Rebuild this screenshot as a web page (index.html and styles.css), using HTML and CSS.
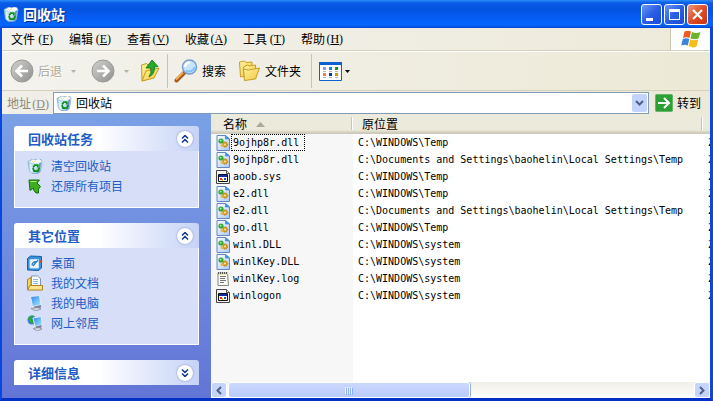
FILE: index.html
```html
<!DOCTYPE html>
<html lang="zh-CN">
<head>
<meta charset="utf-8">
<title>回收站</title>
<link rel="stylesheet" href="styles.css">
</head>
<body>
<svg class="defs" aria-hidden="true">
  <defs>
    <linearGradient id="gray" x1="0" y1="0" x2="1" y2="1"><stop offset="0" stop-color="#d2d2d0"/><stop offset="1" stop-color="#8f8f8f"/></linearGradient>
    <linearGradient id="folder" x1="0" y1="0" x2="1" y2="1"><stop offset="0" stop-color="#fff3a0"/><stop offset="1" stop-color="#f0c63c"/></linearGradient>
    <linearGradient id="page" x1="0" y1="0" x2="1" y2="1"><stop offset="0" stop-color="#ffffff"/><stop offset="1" stop-color="#a9c8f4"/></linearGradient>
    <linearGradient id="screen" x1="0" y1="0" x2="1" y2="1"><stop offset="0" stop-color="#2a80ee"/><stop offset="1" stop-color="#a8f0ff"/></linearGradient>
    <linearGradient id="glass" x1="0" y1="0" x2="1" y2="1"><stop offset="0" stop-color="#8cc8ec"/><stop offset=".5" stop-color="#d8eef8"/><stop offset="1" stop-color="#6fa4cc"/></linearGradient>
    <symbol id="bin" viewBox="0 0 16 16">
      <path d="M1 3.500l4-2 9 0 1 2-1.500 10-2.500 2H5L2.500 13z" fill="url(#glass)" stroke="#7fa9c4" stroke-width=".7"/>
      <path d="M2 4l3.500-2.500L9 2l3-1 2.500 2.500-4 1.500-5 0z" fill="#fdfdfd"/>
      <path d="M4.500 2.500l2 2 2-2" fill="none" stroke="#ecd98c" stroke-width="1"/>
      <path d="M3.500 6l1.200 8" stroke="#e8f8ff" stroke-width="1.200"/>
      <path d="M12.500 5l1.500-.5-1.500 9-2 1.500z" fill="#5a8cc0"/>
      <path d="M6 9.500l1.800-2.300h3v2.300M12 10l-1.200 3.200H8.500M6 10l1 3h1.500" fill="none" stroke="#129020" stroke-width="1.800"/>
    </symbol>
    <symbol id="dll" viewBox="0 0 14 16">
      <path d="M1 .5h8.500l4 3.500v11.500H1z" fill="url(#page)" stroke="#6386c4"/>
      <path d="M9.500.5V4h4z" fill="#3c9cf0" stroke="#3c7cd0" stroke-width=".6"/>
      <circle cx="5" cy="6" r="2.600" fill="#2faa32"/><circle cx="4.700" cy="5.600" r=".9" fill="#baf0a8"/>
      <circle cx="9" cy="9.500" r="2.700" fill="#d29b22" stroke="#9c7418" stroke-width=".7" stroke-dasharray="1 1"/><circle cx="9" cy="9.500" r=".9" fill="#fff3b8"/>
      <circle cx="6" cy="10.500" r="1.500" fill="#e2b94c"/>
    </symbol>
    <symbol id="sys" viewBox="0 0 14 16">
      <path d="M.5 1.500h10l3 3v10H.5z" fill="#f4f4f0" stroke="#444"/>
      <path d="M10.500 1.500v3h3" fill="#ddd" stroke="#555"/>
      <path d="M2.500 5.500h9v7h-9z" fill="#fff" stroke="#111"/><path d="M3 6h8v2H3z" fill="#102aa8"/>
      <path d="M4 9h2v2H4z" fill="#e33"/><path d="M6 10h1v2H6z" fill="#e6b800"/><path d="M8 9h2v2H8z" fill="#1a4cd0"/>
    </symbol>
    <symbol id="log" viewBox="0 0 14 16">
      <path d="M2 2h9.500l1 12.500H2z" fill="#fbfbf6" stroke="#87877d"/>
      <path d="M2 2.500h10" stroke="#e8cf78" stroke-width="2"/><path d="M2 2h10" stroke="#555" stroke-width="2" stroke-dasharray="1 1"/>
      <path d="M4 5.500h6M4 7.500h5M4 9.500h6M4 11.500h4" stroke="#777"/>
    </symbol>
    <symbol id="up2" viewBox="0 0 8 8"><path d="M1 3.500l3-3 3 3M1 7.500l3-3 3 3" fill="none" stroke="#103a8c" stroke-width="1.500"/></symbol>
    <symbol id="down2" viewBox="0 0 8 8"><path d="M1 .5l3 3 3-3M1 4.500l3 3 3-3" fill="none" stroke="#103a8c" stroke-width="1.500"/></symbol>
  </defs>
</svg>

<div class="window">
  <header class="titlebar">
    <svg class="ico16"><use href="#bin"/></svg>
    <h1>回收站</h1>
    <div class="caption">
      <button type="button" aria-label="最小化"><svg viewBox="0 0 19 19"><path d="M4 13h7v3H4z" fill="#fff"/></svg></button>
      <button type="button" aria-label="最大化"><svg viewBox="0 0 19 19"><path d="M4 4h11v11H4zM5 7v7h9V7z" fill="#fff" fill-rule="evenodd"/></svg></button>
      <button type="button" class="close" aria-label="关闭"><svg viewBox="0 0 19 19"><path d="M5 5l9 9M14 5l-9 9" stroke="#fff" stroke-width="2.200"/></svg></button>
    </div>
  </header>

  <nav class="menubar">
    <button type="button">文件<span>(<u>F</u>)</span></button>
    <button type="button">编辑<span>(<u>E</u>)</span></button>
    <button type="button">查看<span>(<u>V</u>)</span></button>
    <button type="button">收藏<span>(<u>A</u>)</span></button>
    <button type="button">工具<span>(<u>T</u>)</span></button>
    <button type="button">帮助<span>(<u>H</u>)</span></button>
    <div class="brand">
      <svg viewBox="0 0 20 18">
        <path d="M3.500 1.500Q7 0 10 1.500L8.500 8Q5 6.500 2 8z" fill="#ee5a24"/>
        <path d="M11 2Q15 4 19.500 2L17.500 8.500Q13.500 10 9.500 8.500z" fill="#69b32d"/>
        <path d="M1.800 9Q5 7.500 8.300 9L6.800 15.500Q3.500 14 .2 15.500z" fill="#3b86dc"/>
        <path d="M9.300 9.500Q13 11 17.200 9.500L15.500 16.500Q11.500 18.500 7.700 16z" fill="#f8bd18"/>
      </svg>
    </div>
  </nav>

  <div class="toolbar">
    <button type="button" class="tool off" disabled>
      <svg class="round" viewBox="0 0 24 24"><circle cx="12" cy="12" r="11" fill="url(#gray)" stroke="#9a9a98"/><path d="M18 12H7M12 6.500L6.500 12l5.500 5.500" fill="none" stroke="#fff" stroke-width="2.600"/></svg>后退</button>
    <button type="button" class="arrow" aria-label="后退列表" disabled><svg viewBox="0 0 5 3"><path d="M0 0h5L2.500 3z" fill="#b5b2a3"/></svg></button>
    <button type="button" class="tool off forward" aria-label="前进" disabled>
      <svg class="round" viewBox="0 0 24 24"><circle cx="12" cy="12" r="11" fill="url(#gray)" stroke="#9a9a98"/><path d="M6 12h11M12 6.500l5.500 5.500-5.500 5.500" fill="none" stroke="#fff" stroke-width="2.600"/></svg></button>
    <button type="button" class="arrow narrow" aria-label="前进列表" disabled><svg viewBox="0 0 5 3"><path d="M0 0h5L2.500 3z" fill="#b5b2a3"/></svg></button>
    <button type="button" class="tool up" aria-label="向上">
      <svg viewBox="0 0 20 24"><path d="M1.500 6l5-1.500 1.500 1.500 6-1v13L2 22z" fill="url(#folder)" stroke="#c69a20"/><path d="M2 22l4-10 13-3-5 10z" fill="url(#folder)" stroke="#c69a20"/><path d="M12 1l6 6.500-3.500.5q.5 7-5.500 10 3-5 1.500-9L6 9z" fill="#25a82b" stroke="#0e7414" stroke-width=".8"/></svg></button>
    <span class="sep"></span>
    <button type="button" class="tool search">
      <svg viewBox="0 0 24 24"><path d="M2.500 21.500L10 14" stroke="#a55a1c" stroke-width="4" stroke-linecap="round"/><path d="M2 20.500l7-7" stroke="#f5ac58" stroke-width="2"/><circle cx="15.500" cy="8" r="7" fill="#c4e4ff" stroke="#7c9cd0" stroke-width="1.500"/><path d="M11 8q.5-4.500 5-4.500" fill="none" stroke="#fff" stroke-width="2.500"/><path d="M12 12q6 2 9-4" fill="none" stroke="#80c4ff" stroke-width="2"/></svg>搜索</button>
    <button type="button" class="tool folders">
      <svg viewBox="0 0 22 22"><path d="M1 2l5-1 1.500 1.500 6-.5v12L2 17z" fill="url(#folder)" stroke="#c99d26"/><path d="M5 7l4-2 2 1 6-1v12L6 20z" fill="url(#folder)" stroke="#c99d26"/><path d="M6 20.500L5 9l5 1 11-2-4 11z" fill="url(#folder)" stroke="#c99d26"/></svg>文件夹</button>
    <span class="sep"></span>
    <button type="button" class="tool views" aria-label="查看方式">
      <svg class="grid" viewBox="0 0 23 19"><path d="M.5.5h22v18H.5z" fill="#fff" stroke="#0a61cf"/><path d="M0 0h23v3H0z" fill="#0a61cf"/><path d="M4 5h3v3H4z" fill="#9a92cc"/><path d="M10 5h3v3h-3z" fill="#1688e8"/><path d="M16 5h3v3h-3z" fill="#0b9a18"/><path d="M4 11h3v3H4z" fill="#ff7a48"/><path d="M10 11h3v3h-3z" fill="#0a32a0"/><path d="M16 11h3v3h-3z" fill="#cc9a00"/><path d="M4 9.500h3M10 9.500h3M16 9.500h3M4 15.500h3M10 15.500h3M16 15.500h3" stroke="#b4b4b4"/></svg>
      <svg class="tri" viewBox="0 0 5 3"><path d="M0 0h5L2.500 3z"/></svg></button>
  </div>

  <form class="address">
    <label for="addr">地址<span>(<u>D</u>)</span></label>
    <div class="combo">
      <svg class="ico16"><use href="#bin"/></svg>
      <input id="addr" type="text" value="回收站">
      <button type="button" aria-label="展开"><svg viewBox="0 0 9 6"><path d="M1 1l3.500 3.500L8 1" fill="none" stroke="#4d6185" stroke-width="2"/></svg></button>
    </div>
    <button type="button" class="go"><svg viewBox="0 0 18 18"><rect x=".5" y=".5" width="17" height="17" rx="1" fill="#2c9f35" stroke="#66b56b"/><path d="M3 9h11M9 4l5 5-5 5" fill="none" stroke="#fff" stroke-width="2"/></svg>转到</button>
  </form>

  <main class="content">
    <aside class="side">
      <section class="card">
        <header><h2>回收站任务</h2><button type="button" aria-label="收起"><svg><use href="#up2"/></svg></button></header>
        <ul>
          <li><a href="#"><svg class="ico16"><use href="#bin"/></svg>清空回收站</a></li>
          <li><a href="#"><svg class="ico16" viewBox="0 0 16 16"><path d="M2 2h10.500L10 5l3.500 3.500q-3 2-2 6.500L9 15q-3-2.500-2.500-5L3 12.500z" fill="#3fae1e" stroke="#176d10"/><path d="M3.500 3.500h6" stroke="#a5e86f"/></svg>还原所有项目</a></li>
        </ul>
      </section>
      <section class="card">
        <header><h2>其它位置</h2><button type="button" aria-label="收起"><svg><use href="#up2"/></svg></button></header>
        <ul>
          <li><a href="#"><svg class="ico16" viewBox="0 0 16 16"><path d="M.5 3.500l3-2.500 11 .5v11.500l-3 2.500-11-.5z" fill="#3b8fd8" stroke="#1760a8"/><path d="M3 4.500h8.500v8.500H3z" fill="#fff" stroke="#bde0fa"/><path d="M5 10.500q0-4 5-4M6 11l5-6" fill="none" stroke="#2a7cc4" stroke-width="1.300"/><path d="M13 5l2.500 1-1 2-2-1z" fill="#e04a18"/></svg>桌面</a></li>
          <li><a href="#"><svg class="ico16" viewBox="0 0 16 16"><path d="M.5 4.500l3.500-2v11.500H.5z" fill="#f7d45c" stroke="#ac8218"/><path d="M4.500 1h6L13.500 3.500V12h-9z" fill="#fff" stroke="#7a97b8"/><path d="M6 4.500h5M6 6.500h5M6 8.500h5" stroke="#8abef0"/><path d="M.5 15L3 10.500h12.500V15z" fill="#fbe690" stroke="#ac8218"/></svg>我的文档</a></li>
          <li><a href="#"><svg class="ico16" viewBox="0 0 16 16"><path d="M3.500 1.500l9-1 1.500 9.500-8.500 1.500z" fill="url(#screen)" stroke="#e4ecf6"/><path d="M7 11.500l7-1.500v2.500l-6 1.500z" fill="#7a8098"/><path d="M4 13.500l7-1 3 1.500-5 2z" fill="#d8d8e0" stroke="#74748c" stroke-width=".6"/></svg>我的电脑</a></li>
          <li><a href="#"><svg class="ico16" viewBox="0 0 16 16"><circle cx="5" cy="5" r="4.500" fill="#2a80d8"/><path d="M1 4q1-3.500 5-3.500L5 4l2 3-2 2-2-2z" fill="#2ea82e"/><path d="M6 3l8-1.500L15.500 10l-7.500 1.500z" fill="url(#screen)" stroke="#e4ecf6"/><path d="M8.500 11.500l6-1.500v2.500L9.500 14z" fill="#7a8098"/><path d="M6 13.500l6-1 3 1.500-5 2z" fill="#d8d8e0" stroke="#74748c" stroke-width=".6"/></svg>网上邻居</a></li>
        </ul>
      </section>
      <section class="card">
        <header><h2>详细信息</h2><button type="button" aria-label="展开"><svg><use href="#down2"/></svg></button></header>
      </section>
    </aside>

    <div class="pane">
      <div class="list">
        <table>
          <colgroup><col class="c-name"><col class="c-path"><col></colgroup>
          <thead><tr><th>名称<svg class="sort" viewBox="0 0 9 5"><path d="M0 5l4.500-5L9 5z" fill="#aca899"/></svg></th><th>原位置</th><th></th></tr></thead>
          <tbody>
            <tr><td><svg><use href="#dll"/></svg><span class="focus">9ojhp8r.dll</span></td><td>C:\WINDOWS\Temp</td><td>2</td></tr>
            <tr><td><svg><use href="#dll"/></svg><span>9ojhp8r.dll</span></td><td>C:\Documents and Settings\baohelin\Local Settings\Temp</td><td>2</td></tr>
            <tr><td><svg><use href="#sys"/></svg><span>aoob.sys</span></td><td>C:\WINDOWS\Temp</td><td>2</td></tr>
            <tr><td><svg><use href="#dll"/></svg><span>e2.dll</span></td><td>C:\WINDOWS\Temp</td><td>2</td></tr>
            <tr><td><svg><use href="#dll"/></svg><span>e2.dll</span></td><td>C:\Documents and Settings\baohelin\Local Settings\Temp</td><td>2</td></tr>
            <tr><td><svg><use href="#dll"/></svg><span>go.dll</span></td><td>C:\WINDOWS\Temp</td><td>2</td></tr>
            <tr><td><svg><use href="#dll"/></svg><span>winl.DLL</span></td><td>C:\WINDOWS\system</td><td>2</td></tr>
            <tr><td><svg><use href="#dll"/></svg><span>winlKey.DLL</span></td><td>C:\WINDOWS\system</td><td>2</td></tr>
            <tr><td><svg><use href="#log"/></svg><span>winlKey.log</span></td><td>C:\WINDOWS\system</td><td>2</td></tr>
            <tr><td><svg><use href="#sys"/></svg><span>winlogon</span></td><td>C:\WINDOWS\system</td><td>2</td></tr>
          </tbody>
        </table>
      </div>
      <div class="scroll">
        <button type="button" aria-label="向左滚动"><svg viewBox="0 0 6 9"><path d="M5 1L1.500 4.500 5 8" fill="none" stroke="#4d6185" stroke-width="2"/></svg></button>
        <div class="track"><div class="thumb"><i></i><i></i><i></i><i></i></div></div>
        <button type="button" aria-label="向右滚动"><svg viewBox="0 0 6 9"><path d="M1 1l3.500 3.500L1 8" fill="none" stroke="#4d6185" stroke-width="2"/></svg></button>
      </div>
    </div>
  </main>
</div>
</body>
</html>
```
FILE: styles.css
```css
* { box-sizing: border-box; }
html, body { height: 100%; margin: 0; }
body { font: 12px/16px "Noto Sans CJK SC", sans-serif; color: #000; overflow: hidden; }
button, input { font: inherit; color: inherit; border: 0; padding: 0; margin: 0; background: none; }
button { display: inline-flex; align-items: center; }
svg { display: block; flex: none; }
h1, h2, ul { margin: 0; padding: 0; }
ul { list-style: none; }
.defs { position: absolute; width: 0; height: 0; }
.ico16 { width: 16px; height: 16px; }

.window { height: 100%; display: flex; flex-direction: column; background: #ece9d8; border: solid #0847e0; border-width: 0 3px 3px 2px; border-bottom-color: #0331c8; }

.titlebar { flex: none; height: 28px; margin: 0 -3px 0 -2px; padding: 0 5px 0 3px; display: flex; align-items: center; gap: 4px; background: linear-gradient(#2a8cf8 0, #0a5ce8 3px, #0453e0 10px, #0560f8 20px, #0468ff 25px, #0345d0 28px); }
.titlebar h1 { flex: 1; font-size: 14px; line-height: 20px; font-weight: 700; color: #fff; text-shadow: 1px 1px #0a2f8c; }
.caption { display: flex; gap: 2px; }
.caption button { width: 21px; height: 21px; border: 1px solid #fff; border-radius: 3px; background: linear-gradient(135deg, #6c98f4, #2a5ee4 50%, #1a4cd8); }
.caption button.close { background: linear-gradient(135deg, #f09a80, #de4c28 50%, #c83410); }
.caption svg { width: 19px; height: 19px; }

.menubar { flex: none; height: 23px; display: flex; align-items: center; padding-left: 9px; gap: 16px; background: linear-gradient(90deg, #f2f1ec, #edeada); border-bottom: 1px solid #d4d0bc; }
.menubar span, .address label span { display: inline-block; width: 18px; text-align: right; font: 12px/14px "Liberation Serif", serif; }
.brand { margin-left: auto; align-self: stretch; width: 40px; display: flex; align-items: center; justify-content: center; background: #fff; border-left: 1px solid #cbc8b4; }
.brand svg { width: 20px; height: 18px; }
.menubar u, .address u { text-underline-offset: 1px; }

.toolbar { flex: none; height: 40px; padding: 0 8px; display: flex; align-items: center; background: linear-gradient(90deg, #f3f2ed, #ece9d6); border-top: 1px solid #fff; border-bottom: 1px solid #d4d0bc; }
.tool { gap: 4px; }
.off { color: #aca899; text-shadow: 1px 1px #fff; }
.round { width: 24px; height: 24px; }
.arrow { width: 29px; padding-left: 9px; }
.arrow.narrow { width: 25px; }
.arrow svg, .tri { width: 5px; height: 3px; }
.up svg { width: 20px; height: 24px; }
.sep { width: 1px; height: 34px; margin: 0 6px 0 7px; background: #c8c4ac; }
.search svg { width: 24px; height: 24px; }
.search { margin-right: 12px; }
.folders svg { width: 23px; height: 22px; }
.folders { margin-right: 3px; }
.views { gap: 3px; margin-left: 1px; }
.grid { width: 23px; height: 19px; }

.address { flex: none; height: 23px; margin: 0; display: flex; align-items: center; padding: 0 9px 0 5px; background: linear-gradient(90deg, #f0efe8, #ece9d8); }
.address label { width: 46px; color: #8c8a7e; white-space: nowrap; }
.combo { flex: 1; height: 22px; display: flex; align-items: center; gap: 4px; padding: 0 1px 0 2px; background: #fff; border: 1px solid #7f9db9; }
.combo input { flex: 1; min-width: 0; height: 18px; outline: 0; }
.combo button { width: 15px; height: 18px; justify-content: center; background: #c4d3fb; border-radius: 2px; }
.combo button svg { width: 9px; height: 6px; }
.go { gap: 4px; margin-left: 6px; }
.go svg { width: 18px; height: 18px; }

.content { flex: 1; min-height: 0; display: flex; }
.side { flex: none; width: 209px; padding: 12px; display: flex; flex-direction: column; gap: 15px; overflow: hidden; background: linear-gradient(#7aa1e6, #6375d6); }
.card { flex: none; width: 185px; }
.card header { height: 25px; display: flex; align-items: center; justify-content: space-between; padding: 0 6px 0 14px; border-radius: 3px 3px 0 0; background: linear-gradient(90deg, #fff 45%, #c6d3f7); }
.card h2 { font-size: 13px; line-height: 18px; color: #215dc6; }
.card header button { width: 16px; height: 16px; justify-content: center; border-radius: 50%; background: #fff; box-shadow: 0 0 2px #7484b8; }
.card header svg { width: 8px; height: 8px; }
.card ul { padding: 5px 12px 11px; border: 1px solid #fff; border-top: 0; background: #d6dff7; }
.card li { height: 20px; }
.card a { display: flex; align-items: center; height: 20px; gap: 8px; color: #215dc6; text-decoration: none; }

.pane { flex: 1; min-width: 0; display: flex; flex-direction: column; }
.list { flex: 1; min-height: 0; overflow: hidden; background: linear-gradient(90deg, #f7f7f7 142px, #fff 142px); }
table { width: 100%; table-layout: fixed; border-collapse: separate; border-spacing: 0; }
.c-name { width: 142px; }
.c-path { width: 350px; }
th { height: 20px; padding: 0 0 0 9px; text-align: left; font-weight: 400; line-height: 16px; white-space: nowrap; background: linear-gradient(#ebeadb 16px, #d6d2c2 18px, #cbc7b8 20px); }
th:first-child { padding-left: 12px; }
th:last-child, td:last-child { padding-right: 0; }
th:not(:last-child) { background: linear-gradient(#c7c5b2, #c7c5b2) calc(100% - 1px) 3px / 1px 13px no-repeat, linear-gradient(#fff, #fff) 100% 3px / 1px 13px no-repeat, linear-gradient(#ebeadb 16px, #d6d2c2 18px, #cbc7b8 20px); }
.sort { display: inline-block; width: 9px; height: 5px; margin-left: 9px; vertical-align: 2px; }
td { height: 17px; padding: 0 0 0 5px; font: 10px/15px "DejaVu Sans Mono", monospace; white-space: nowrap; overflow: hidden; }
td svg { display: inline-block; width: 14px; height: 16px; vertical-align: middle; }
td span { display: inline-block; height: 17px; margin-left: 1px; padding: 0 5px 0 1px; border: 1px solid transparent; vertical-align: middle; }
td .focus { border: 1px dotted #000; }

.scroll { flex: none; height: 16px; display: flex; background: linear-gradient(#f0efe8, #fefefb); }
.scroll button { width: 16px; height: 16px; justify-content: center; border: 1px solid #fff; border-radius: 3px; background: #c6d4fc; }
.scroll button svg { width: 6px; height: 9px; }
.track { flex: 1; padding: 0 1px; }
.thumb { width: 52%; height: 16px; display: flex; align-items: center; justify-content: center; gap: 1px; border: 1px solid #fff; border-radius: 3px; background: linear-gradient(#cbd8fe, #bacbfa); box-shadow: 1px 0 #98b0e0; }
.thumb i { width: 1px; height: 7px; background: #eef4fe; box-shadow: 1px 1px #8cb0f8; }
```
